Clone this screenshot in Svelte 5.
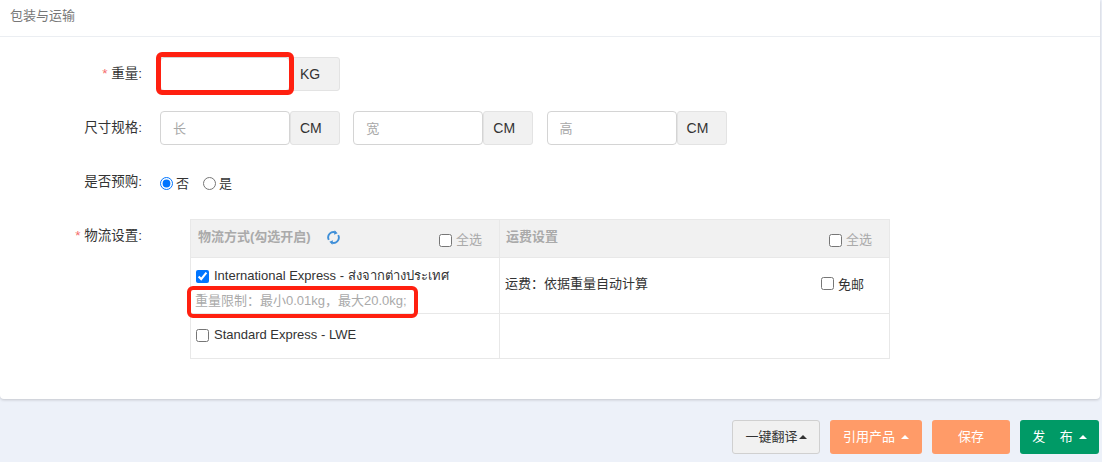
<script>
	const sizes = [
		{ placeholder: '长', unit: 'CM' },
		{ placeholder: '宽', unit: 'CM' },
		{ placeholder: '高', unit: 'CM' }
	];
</script>

<div class="page">
	<section class="card">
		<header class="card-head">包装与运输</header>
		<div class="form">
			<div class="row weight">
				<span class="label"><i>*</i> 重量:</span>
				<div class="group marked">
					<input type="text" />
					<span class="unit">KG</span>
					<span class="mark"></span>
				</div>
			</div>
			<div class="row size">
				<span class="label">尺寸规格:</span>
				<div class="groups">
					{#each sizes as s}
						<div class="group">
							<input type="text" placeholder={s.placeholder} />
							<span class="unit">{s.unit}</span>
						</div>
					{/each}
				</div>
			</div>
			<div class="row presale">
				<span class="label">是否预购:</span>
				<label class="radio"><input type="radio" name="presale" checked />否</label>
				<label class="radio"><input type="radio" name="presale" />是</label>
			</div>
			<div class="row logistics">
				<span class="label"><i>*</i> 物流设置:</span>
				<div class="table">
					<div class="cell th first">
						<b>物流方式(勾选开启)</b>
						<svg class="refresh" viewBox="0 0 16 16" width="15" height="15" fill="none" stroke="#3f8fd8" stroke-width="2">
							<path d="M3 10.5A5.6 5.6 0 0 1 10.5 2.9" />
							<path d="M13 5.5A5.6 5.6 0 0 1 5.5 13.1" />
							<path d="M9.2 0.2L12.4 3.4L8.6 5Z" fill="#3f8fd8" stroke="none" />
							<path d="M6.8 15.8L3.6 12.6L7.4 11Z" fill="#3f8fd8" stroke="none" />
						</svg>
						<label class="all"><input type="checkbox" />全选</label>
					</div>
					<div class="cell th second">
						<b>运费设置</b>
						<label class="all"><input type="checkbox" />全选</label>
					</div>
					<div class="cell method">
						<label class="check"><input type="checkbox" checked />International Express - ส่งจากต่างประเทศ</label>
						<p class="limit">重量限制&#xFF1A;最小0.01kg&#xFF0C;最大20.0kg;</p>
						<span class="mark"></span>
					</div>
					<div class="cell fee">
						<span>运费&#xFF1A;依据重量自动计算</span>
						<label class="free"><input type="checkbox" />免邮</label>
					</div>
					<div class="cell method last">
						<label class="check lower"><input type="checkbox" />Standard Express - LWE</label>
					</div>
					<div class="cell last"></div>
				</div>
			</div>
		</div>
	</section>

	<footer class="actions">
		<button class="plain">一键翻译<span class="caret"></span></button>
		<button class="orange wide">引用产品<span class="caret"></span></button>
		<button class="orange save">保存</button>
		<button class="green">发&nbsp;&nbsp;&nbsp;&nbsp;布<span class="caret"></span></button>
	</footer>
</div>

<style>
	:global(body) {
		margin: 0;
		background: #edf1f9;
		font-family: "Liberation Sans", "Noto Sans CJK SC", "Noto Sans", sans-serif;
		font-size: 13px;
		color: #333;
	}

	.page {
		width: 1102px;
		height: 462px;
		overflow: hidden;
	}

	.card {
		box-sizing: border-box;
		width: 1100px;
		height: 399px;
		background: #fff;
		border-radius: 0 0 4px 4px;
		box-shadow: 0 1px 3px rgba(0, 0, 0, 0.18);
	}

	.card-head {
		box-sizing: border-box;
		height: 37px;
		padding: 7px 10px 0;
		border-bottom: 1px solid #ebeef2;
		color: #777;
		line-height: 18px;
	}

	.form {
		padding-top: 20px;
	}

	.row {
		display: flex;
		align-items: center;
	}

	.label {
		box-sizing: border-box;
		flex: none;
		width: 142px;
		margin-right: 18px;
		text-align: right;
		white-space: nowrap;
		line-height: 20px;
		font-size: 13.5px;
	}

	.label i {
		color: #f56c6c;
		font-style: normal;
	}

	.size {
		margin-top: 20px;
	}

	.presale {
		margin-top: 27px;
		height: 20px;
	}

	.logistics {
		margin-top: 27px;
		align-items: flex-start;
	}

	.logistics .label {
		margin-right: 48px;
		margin-top: 7px;
	}

	.groups {
		display: flex;
		gap: 13.3px;
	}

	.group {
		position: relative;
		display: flex;
		height: 34px;
	}

	.group input {
		box-sizing: border-box;
		width: 130px;
		height: 34px;
		padding: 0 12px;
		border: 1px solid #d4d4d4;
		border-radius: 4px;
		outline: none;
		font: inherit;
		background: #fff;
	}

	.group input::placeholder {
		color: #a8a8a8;
	}

	.unit {
		box-sizing: border-box;
		width: 50px;
		padding-left: 9px;
		border: 1px solid #e3e3e3;
		border-radius: 3px;
		background: #f1f1f1;
		line-height: 32px;
		font-size: 14px;
	}

	.mark {
		position: absolute;
		box-sizing: border-box;
		border: 5px solid #ff2010;
		border-radius: 6px;
		pointer-events: none;
	}

	.marked .mark {
		left: -4px;
		top: -5px;
		width: 138px;
		height: 43px;
	}

	.radio {
		display: flex;
		align-items: center;
		margin-right: 14px;
	}

	.radio input {
		width: 13px;
		height: 13px;
		margin: 2px 3px 0 0;
		accent-color: #0075ff;
	}

	.table {
		display: grid;
		grid-template-columns: 309px 389px;
		grid-template-rows: 38px 56px 44px;
		box-sizing: border-box;
		width: 700px;
		border: 1px solid #e8e8e8;
	}

	.cell {
		position: relative;
		box-sizing: border-box;
		border-bottom: 1px solid #e8e8e8;
	}

	.cell:nth-child(odd) {
		border-right: 1px solid #e8e8e8;
	}

	.cell.last {
		border-bottom: 0;
	}

	.th {
		display: flex;
		align-items: flex-start;
		background: #f1f1f1;
		color: #aaa;
	}

	.th b {
		margin-top: 8px;
		margin-left: 6px;
		line-height: 18px;
	}

	.first b {
		margin-left: 7px;
	}

	.refresh {
		margin: 10px 0 0 15px;
	}

	.all {
		display: flex;
		align-items: center;
		margin-left: auto;
		margin-top: 11px;
		margin-right: 17px;
		line-height: 18px;
	}

	.all input,
	.free input {
		width: 13px;
		height: 13px;
		margin: 0 4px 0 0;
		accent-color: #0075ff;
	}

	.check input {
		width: 13px;
		height: 13px;
		margin: 0 5px 0 0;
		accent-color: #0075ff;
	}

	.method {
		padding: 9px 0 0 5px;
	}

	.check {
		display: flex;
		align-items: center;
		line-height: 18px;
	}

	.lower {
		margin-top: 3px;
	}

	.limit {
		margin: 7px 0 0 -1px;
		color: #aaa;
		line-height: 18px;
		white-space: nowrap;
	}

	.method .mark {
		left: -4px;
		top: 28px;
		width: 231px;
		height: 32px;
		border-width: 4px;
	}

	.fee {
		display: flex;
		align-items: center;
		justify-content: space-between;
		padding: 0 25px 5px 5px;
	}

	.fee span {
		margin-bottom: 2px;
	}

	.free {
		display: flex;
		align-items: center;
	}

	.actions {
		display: flex;
		justify-content: flex-end;
		gap: 10px;
		padding: 21px 3px 0 0;
	}

	button {
		box-sizing: border-box;
		height: 34px;
		padding: 0 0 3px;
		border: 0;
		border-radius: 3px;
		font: inherit;
		color: #fff;
		display: flex;
		align-items: center;
		justify-content: center;
	}

	.plain {
		width: 88px;
		background: #f1f1f1;
		border: 1px solid #d0d0d0;
		color: #333;
	}

	.orange {
		background: #ff9b68;
	}

	.wide {
		width: 92px;
	}

	.save {
		width: 78px;
	}

	.green {
		width: 79px;
		background: #009a66;
	}

	.caret {
		width: 0;
		height: 0;
		margin: 3px 0 0 6px;
		border: 4px solid transparent;
		border-top: 0;
		border-bottom: 4px solid currentColor;
	}

	.plain .caret {
		margin-left: 1px;
	}
</style>
